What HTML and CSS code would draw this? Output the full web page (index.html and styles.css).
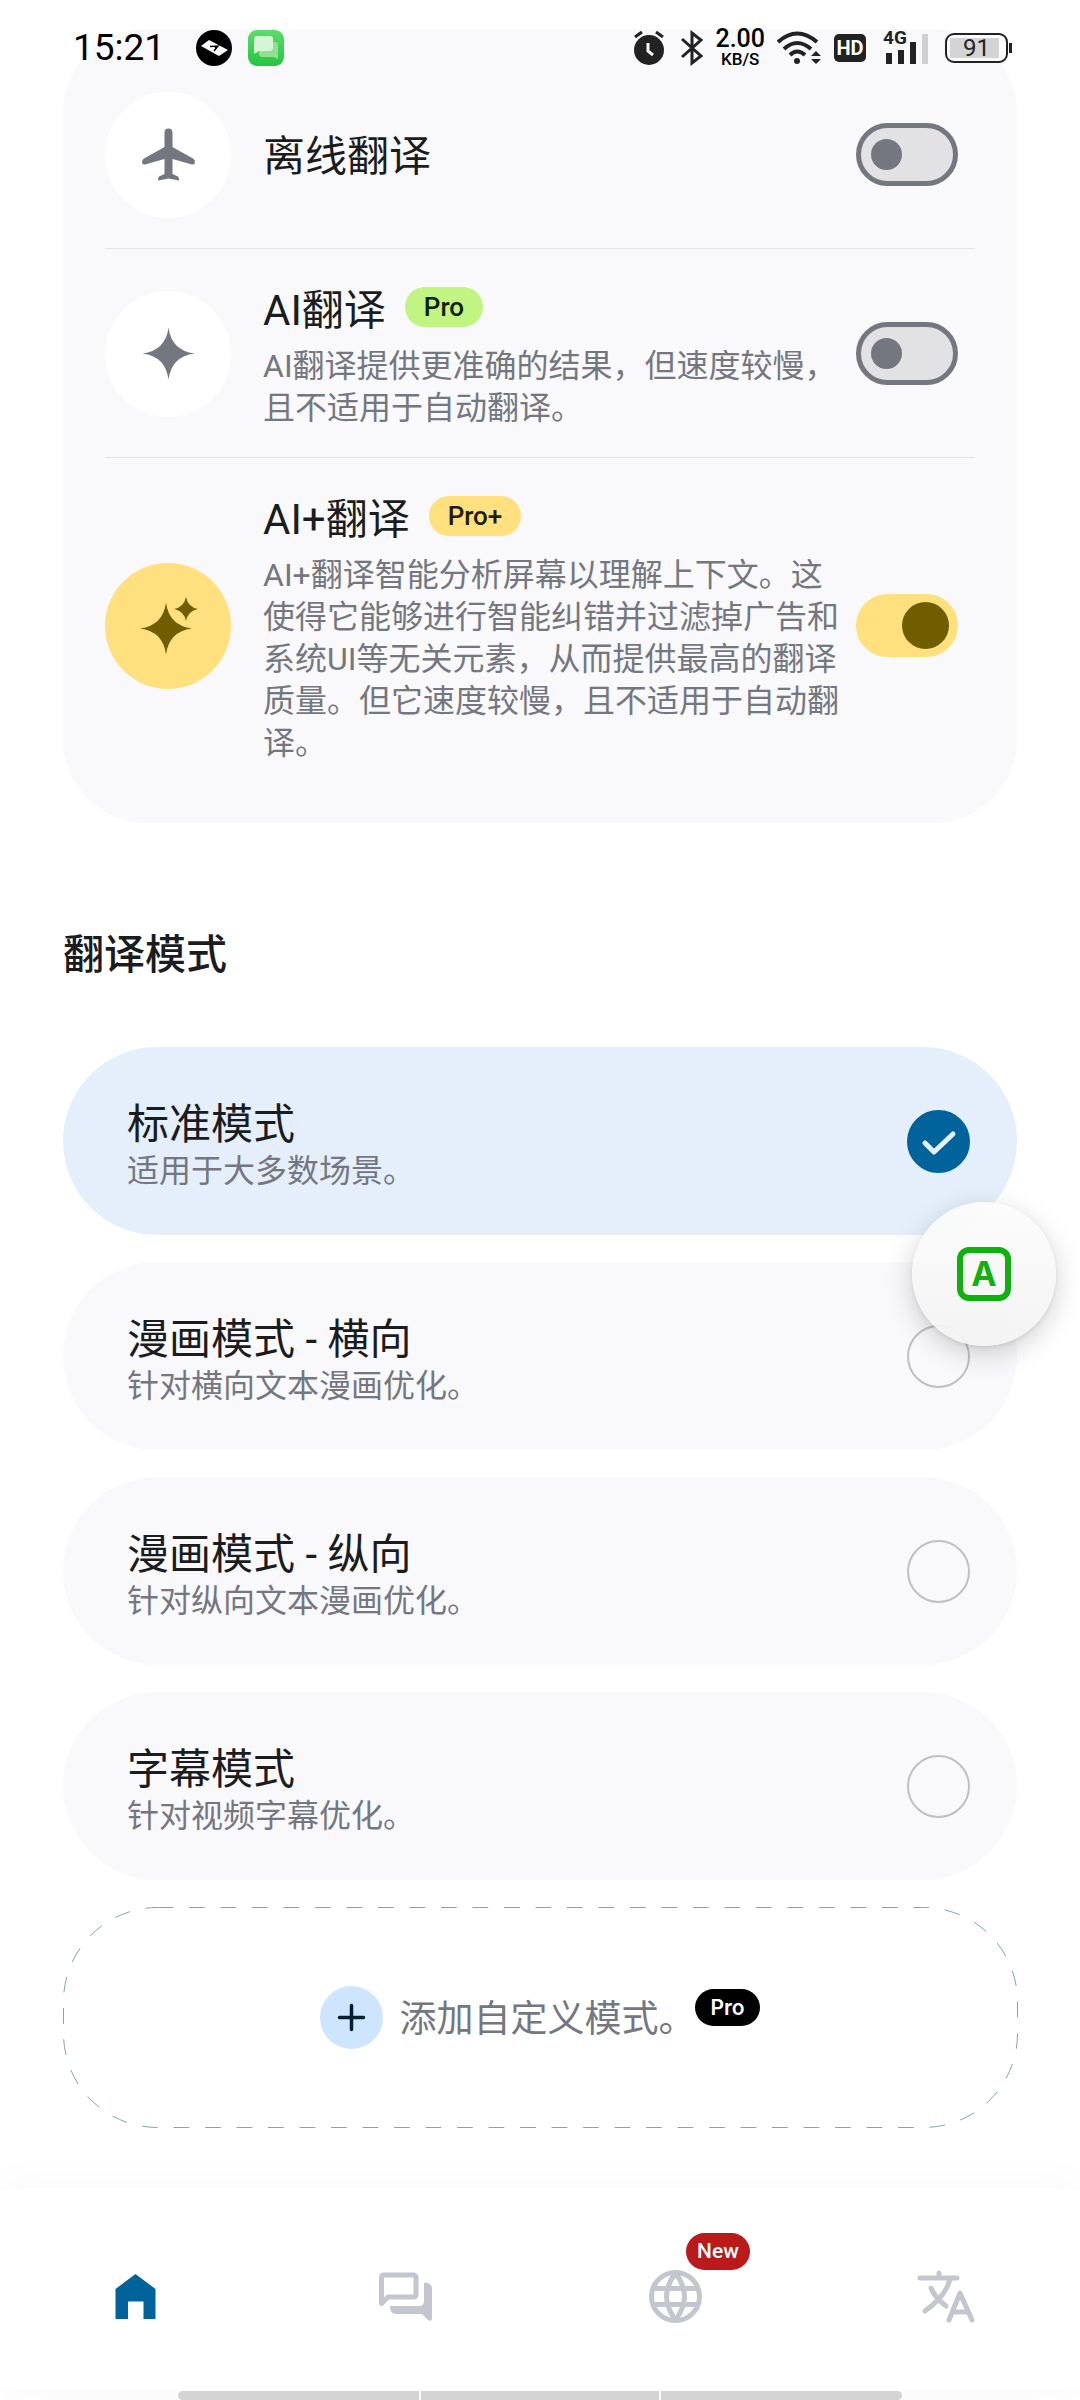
FILE: index.html
```html
<!DOCTYPE html>
<html lang="zh-CN">

<head>
    <meta charset="UTF-8">
    <meta name="viewport" content="width=device-width, initial-scale=1.0">
    <title>翻译模式</title>
    <link rel="stylesheet" href="styles.css">
</head>

<body>

    <!-- Status bar -->
    <header class="status-bar">
        <div class="status-left">
            <span class="clock">15:21</span>
            <svg class="app-icon" viewBox="0 0 36 36">
                <circle cx="18" cy="18" r="18" fill="#000" />
                <path d="M5 16L13 10L32 20L23 26Z" fill="#fff" />
                <path d="M14 16.500L22 16L18 21M19 16.500L20 18.500" fill="none" stroke="#000" stroke-width="1.500" />
            </svg>
            <svg class="app-icon" viewBox="0 0 36 36">
                <defs>
                    <linearGradient id="green" x1="0" y1="0" x2="0" y2="1">
                        <stop offset="0" stop-color="#5bdc6c" />
                        <stop offset="1" stop-color="#25c441" />
                    </linearGradient>
                </defs>
                <rect width="36" height="36" rx="9" fill="url(#green)" />
                <path d="M13 12H27Q30 12 30 15V29L26 27H14Q11 27 11 24V15Q11 12 13 12Z" fill="#8fe08f" />
                <path d="M9 6H22Q25 6 25 9V18Q25 21 22 21H11L6 24V9Q6 6 9 6Z" fill="#d5f5d5" />
            </svg>
        </div>
        <div class="status-right">
            <svg class="alarm" viewBox="0 0 32 36">
                <circle cx="16" cy="20" r="15" fill="#222" />
                <path d="M2 7L9 2M30 7L23 2" stroke="#222" stroke-width="3" />
                <path d="M15 13V21L20 25" fill="none" stroke="#f9f9fc" stroke-width="3" />
            </svg>
            <svg class="bluetooth" viewBox="0 0 22 36">
                <path d="M1 9L20 26L11 33V3L20 10L1 27" fill="none" stroke="#222" stroke-width="3" />
            </svg>
            <div class="speed">
                <span class="speed-value">2.00</span>
                <span class="speed-unit">KB/S</span>
            </div>
            <svg class="wifi" viewBox="0 0 44 34">
                <g fill="none" stroke="#222" stroke-width="4">
                    <path d="M1 11Q20 -6 40 11" />
                    <path d="M7 18Q20 6 34 18" />
                    <path d="M13 24Q20 17 28 24" />
                </g>
                <circle cx="20" cy="30" r="3" fill="#222" />
                <path d="M34 25H44L39 20ZM34 28H44L39 33Z" fill="#222" />
            </svg>
            <span class="hd">HD</span>
            <div class="signal">
                <span class="signal-label">4G</span>
                <svg viewBox="0 0 46 34">
                    <path d="M6 22V33M18 19V33M30 11V33" stroke="#222" stroke-width="6" />
                    <path d="M42 3V33" stroke="#d0d0d3" stroke-width="6" />
                </svg>
            </div>
            <span class="battery">91</span>
        </div>
    </header>

    <main class="content">

        <!-- Translation engines -->
        <section class="engines">
            <label class="engine">
                <span class="engine-icon">
                    <svg viewBox="0 0 63 63">
                        <path d="M27.500 9.500Q27.500 5.500 31.500 5.500Q35.500 5.500 35.500 9.500V24L56 35.500Q58 36.500 58 39Q58 42 55 41.500L35.500 36V51L41 53.500Q42 54 42 57.500L31.500 55.500L21 57.500Q21 54 22 53.500L27.500 51V36L8 41.500Q5 42 5 39Q5 36.500 7 35.500L27.500 24Z" />
                    </svg>
                </span>
                <span class="engine-text">
                    <span class="engine-title">离线翻译</span>
                </span>
                <input class="switch" type="checkbox">
            </label>

            <label class="engine">
                <span class="engine-icon">
                    <svg viewBox="0 0 63 63">
                        <path d="M31.500 5.500Q34.500 28.500 57.500 31.500Q34.500 34.500 31.500 57.500Q28.500 34.500 5.500 31.500Q28.500 28.500 31.500 5.500Z" />
                    </svg>
                </span>
                <span class="engine-text">
                    <span class="engine-title">AI翻译 <span class="badge badge-pro">Pro</span></span>
                    <span class="engine-desc">AI翻译提供更准确的结果，但速度较慢，且不适用于自动翻译。</span>
                </span>
                <input class="switch" type="checkbox">
            </label>

            <label class="engine">
                <span class="engine-icon engine-icon-plus">
                    <svg viewBox="0 0 63 63">
                        <path d="M29 8.500Q32 31.500 55 34.500Q32 37.500 29 60.500Q26 37.500 3 34.500Q26 31.500 29 8.500Z" />
                        <path d="M49 3Q51 13 61 15Q51 17 49 27Q47 17 37 15Q47 13 49 3Z" />
                    </svg>
                </span>
                <span class="engine-text">
                    <span class="engine-title">AI+翻译 <span class="badge badge-plus">Pro+</span></span>
                    <span class="engine-desc">AI+翻译智能分析屏幕以理解上下文。这使得它能够进行智能纠错并过滤掉广告和系统UI等无关元素，从而提供最高的翻译质量。但它速度较慢，且不适用于自动翻译。</span>
                </span>
                <input class="switch" type="checkbox" checked>
            </label>
        </section>

        <!-- Translation modes -->
        <h2>翻译模式</h2>

        <div class="modes">
            <label class="mode">
                <span class="mode-text">
                    <span class="mode-title">标准模式</span>
                    <span class="mode-desc">适用于大多数场景。</span>
                </span>
                <span class="mode-radio">
                    <input type="radio" name="mode" checked>
                    <svg viewBox="0 0 63 63"><path d="M18 33L27 42L46 24" /></svg>
                </span>
            </label>

            <label class="mode">
                <span class="mode-text">
                    <span class="mode-title">漫画模式 - 横向</span>
                    <span class="mode-desc">针对横向文本漫画优化。</span>
                </span>
                <span class="mode-radio">
                    <input type="radio" name="mode">
                </span>
            </label>

            <label class="mode">
                <span class="mode-text">
                    <span class="mode-title">漫画模式 - 纵向</span>
                    <span class="mode-desc">针对纵向文本漫画优化。</span>
                </span>
                <span class="mode-radio">
                    <input type="radio" name="mode">
                </span>
            </label>

            <label class="mode">
                <span class="mode-text">
                    <span class="mode-title">字幕模式</span>
                    <span class="mode-desc">针对视频字幕优化。</span>
                </span>
                <span class="mode-radio">
                    <input type="radio" name="mode">
                </span>
            </label>

            <button class="add-mode" type="button">
                <svg class="add-outline"><rect x="0.500" y="0.500" width="100%" height="100%" rx="94" stroke-dasharray="15.750" /></svg>
                <svg class="add-icon" viewBox="0 0 63 63">
                    <circle cx="31.500" cy="31.500" r="31.500" fill="#cee5ff" />
                    <path d="M19.500 31.500H43.500M31.500 19.500V43.500" stroke="#001d33" stroke-width="3.500" stroke-linecap="round" />
                </svg>
                <span class="add-text">添加自定义模式。</span>
                <span class="add-badge">Pro</span>
            </button>
        </div>
    </main>

    <!-- Floating translate button -->
    <button class="floating" type="button"><span class="floating-icon">A</span></button>

    <nav class="bottom-nav">
        <a class="active" href="#" aria-label="首页">
            <svg viewBox="0 0 63 63"><path d="M31.500 9L51.500 24V54H39.500V36.500H24V54H11.500V24Z" /></svg>
        </a>
        <a href="#" aria-label="对话">
            <svg viewBox="0 0 63 63">
                <path d="M10 10H39Q42 10 42 13V29Q42 32 39 32H14L7.500 38.500V13Q7.500 10 10 10Z" fill="none" stroke="#c3c6cf" stroke-width="5" stroke-linejoin="round" />
                <path d="M50 17.500Q58 17.500 58 24V54Q57 57 54 55L48 49H22Q16 49 16 41H45Q50 41 50 36Z" />
            </svg>
        </a>
        <a href="#" aria-label="网页">
            <span class="nav-badge">New</span>
            <svg viewBox="0 0 63 63">
                <g fill="none" stroke="#c3c6cf" stroke-width="5">
                    <circle cx="31.500" cy="31.500" r="24" />
                    <path d="M31.500 8Q22.500 20 22.500 31.500T31.500 55M31.500 8Q40.500 20 40.500 31.500T31.500 55M10 23.500H53M10 39.500H53" />
                </g>
            </svg>
        </a>
        <a href="#" aria-label="语言">
            <svg viewBox="0 0 63 63">
                <g fill="none" stroke="#c3c6cf" stroke-width="5" stroke-linecap="round" stroke-linejoin="round">
                    <path d="M6 13H43M25 8V12M36 14Q32 31 11 46M17 23Q21 33 32 41" />
                    <path d="M35 55L46 28L58 55M39 47H53" />
                </g>
            </svg>
        </a>
    </nav>
    <div class="gesture-bar"><span></span><span></span><span></span></div>

</body>

</html>
```

FILE: styles.css
```css
* {
    box-sizing: border-box;
}

body {
    position: relative;
    display: flex;
    flex-direction: column;
    min-height: 100vh;
    margin: 0;
    background-color: #fff;
    color: #1a1c1e;
    font-family: Roboto, "Noto Sans CJK SC", sans-serif;
}

button {
    font-family: inherit;
    cursor: pointer;
}

/* Status bar */
.status-bar {
    position: absolute;
    top: 28px;
    left: 0;
    right: 0;
    display: flex;
    justify-content: space-between;
    align-items: center;
    height: 40px;
    padding: 0 72px 0 73px;
    color: #000;
}

.status-left,
.status-right {
    display: flex;
    align-items: center;
}

.status-left {
    gap: 16px;
}

.clock {
    margin-right: 15px;
    font-size: 37px;
    line-height: 40px;
}

.app-icon {
    width: 36px;
    height: 36px;
}

.alarm {
    width: 32px;
    height: 36px;
    margin-right: 16px;
}

.bluetooth {
    width: 22px;
    height: 36px;
    margin-right: 12px;
}

.speed {
    display: flex;
    flex-direction: column;
    align-items: center;
    margin-right: 12px;
    font-weight: 500;
}

.speed-value {
    font-size: 25px;
    line-height: 22px;
}

.speed-unit {
    font-size: 17px;
    line-height: 18px;
}

.wifi {
    width: 44px;
    height: 34px;
    margin-right: 13px;
}

.hd {
    width: 32px;
    height: 28px;
    margin-right: 17px;
    border-radius: 5px;
    background-color: #222;
    color: #fff;
    font-size: 20px;
    font-weight: 700;
    line-height: 28px;
    text-align: center;
}

.signal {
    position: relative;
    width: 46px;
    height: 34px;
    margin-right: 16px;
}

.signal svg {
    display: block;
}

.signal-label {
    position: absolute;
    top: -2px;
    left: 0;
    color: #222;
    font-size: 19px;
    font-weight: 700;
    line-height: 18px;
}

.battery {
    position: relative;
    width: 63px;
    height: 30px;
    border: 2px solid #222;
    border-radius: 9px;
    background: linear-gradient(#d4d4d6, #d4d4d6) 3px 3px / 49px 20px no-repeat;
    color: #222;
    font-size: 24px;
    line-height: 26px;
    text-align: center;
}

.battery::after {
    content: "";
    position: absolute;
    top: 8px;
    right: -6px;
    width: 3px;
    height: 10px;
    background-color: #222;
}

.content {
    padding: 29px 63px 0;
}

/* Translation engines */
.engines {
    padding: 31px 42px;
    border-radius: 84px;
    background-color: #f9f9fc;
}

.engine {
    display: flex;
    align-items: center;
    min-height: 188px;
    padding: 29px 17px 28px 0;
}

.engine + .engine {
    border-top: 1px solid #e6e6ea;
}

.engine-icon {
    display: flex;
    align-items: center;
    justify-content: center;
    flex: none;
    width: 126px;
    height: 126px;
    margin-right: 32px;
    border-radius: 50%;
    background-color: #fff;
    fill: #74777f;
}

.engine-icon svg {
    width: 63px;
    height: 63px;
}

.engine-icon-plus {
    background-color: #ffe07f;
    fill: #6f5d00;
}

.engine-text {
    flex: 1;
    margin-right: 12px;
}

.engine-title {
    display: flex;
    align-items: center;
    gap: 19px;
    padding-top: 4px;
    font-size: 42px;
    line-height: 57px;
}

.engine-desc {
    display: block;
    margin-top: 6px;
    color: #74777f;
    font-size: 32px;
    line-height: 42px;
}

.badge {
    margin-bottom: 8px;
    padding: 0 19px;
    border-radius: 20px;
    font-size: 26px;
    font-weight: 500;
    line-height: 40px;
}

.badge-pro {
    background-color: #c2f482;
    color: #0f2000;
}

.badge-plus {
    background-color: #ffe07f;
    color: #221b00;
}

.switch {
    position: relative;
    appearance: none;
    flex: none;
    width: 102px;
    height: 63px;
    margin: 0;
    border: 5px solid #74777f;
    border-radius: 32px;
    background-color: #e2e2e5;
}

.switch::before {
    content: "";
    position: absolute;
    top: 11px;
    left: 10px;
    width: 31px;
    height: 31px;
    border-radius: 50%;
    background-color: #74777f;
}

.switch:checked {
    border-color: #ffe07f;
    background-color: #ffe07f;
}

.switch:checked::before {
    top: 3px;
    left: 41px;
    width: 47px;
    height: 47px;
    background-color: #6f5d00;
}

/* Translation modes */
h2 {
    margin: 102px 0 62px;
    font-size: 41px;
    font-weight: 500;
    line-height: 60px;
}

.modes {
    display: flex;
    flex-direction: column;
    gap: 27px;
}

.mode {
    display: flex;
    align-items: center;
    justify-content: space-between;
    min-height: 188px;
    padding: 0 47px 0 64px;
    border-radius: 94px;
    background-color: #f9f9fc;
}

.mode:has(input:checked) {
    background-color: #e5effc;
}

.mode-title,
.mode-desc {
    display: block;
}

.mode-title {
    padding-top: 10px;
    font-size: 42px;
    line-height: 50px;
}

.mode-desc {
    color: #74777f;
    font-size: 32px;
    line-height: 42px;
}

.mode-radio {
    display: grid;
    width: 63px;
    height: 63px;
}

.mode-radio input,
.mode-radio svg {
    grid-area: 1 / 1;
    width: 63px;
    height: 63px;
    margin: 0;
}

.mode-radio input {
    appearance: none;
    border: 2px solid #c0c0c4;
    border-radius: 50%;
}

.mode-radio input:checked {
    border-color: #00639b;
    background-color: #00639b;
}

.mode-radio path {
    fill: none;
    stroke: #e5f1ff;
    stroke-width: 5px;
    stroke-linecap: round;
    stroke-linejoin: round;
}

.add-mode {
    position: relative;
    display: flex;
    align-items: center;
    justify-content: center;
    min-height: 220px;
    padding: 0;
    border: none;
    background: none;
}

.add-outline {
    position: absolute;
    inset: 0;
    width: 100%;
    height: 100%;
    overflow: visible;
    fill: none;
    stroke: #86a3ae;
    stroke-width: 1px;
}

.add-icon {
    width: 63px;
    height: 63px;
    margin-right: 16px;
}

.add-text {
    padding-top: 6px;
    color: #74777f;
    font-size: 37px;
    line-height: 54px;
}

.add-badge {
    align-self: flex-start;
    margin-top: 82px;
    padding: 0 15px;
    border-radius: 19px;
    background-color: #000;
    color: #fff;
    font-family: Inter, sans-serif;
    font-size: 21px;
    font-weight: 600;
    line-height: 37px;
}

.floating {
    position: absolute;
    top: 1202px;
    right: 24px;
    display: flex;
    align-items: center;
    justify-content: center;
    width: 144px;
    height: 144px;
    padding: 0;
    border: none;
    border-radius: 50%;
    background: linear-gradient(rgba(252, 252, 252, 0.95), rgba(243, 243, 243, 0.95));
    box-shadow: 0 8px 28px rgba(0, 0, 0, 0.18), 0 2px 4px rgba(0, 0, 0, 0.08);
}

.floating-icon {
    width: 54px;
    height: 54px;
    border: 6px solid #11b011;
    border-radius: 12px;
    color: #11b011;
    font-family: Inter, sans-serif;
    font-size: 34px;
    font-weight: 700;
    line-height: 42px;
    text-align: center;
}

/* Bottom navigation */
.bottom-nav {
    display: grid;
    grid-template-columns: repeat(4, 1fr);
    margin-top: auto;
    background-color: #fff;
    box-shadow: 0 0 50px rgba(0, 0, 0, 0.03);
}

.bottom-nav a {
    position: relative;
    display: flex;
    justify-content: center;
    padding: 76px 0 63px;
    fill: #c3c6cf;
}

.bottom-nav a.active {
    fill: #00639b;
}

.bottom-nav svg {
    width: 63px;
    height: 63px;
}

.nav-badge {
    position: absolute;
    top: 44px;
    left: 50%;
    margin-left: 11px;
    padding: 0 11px;
    border-radius: 19px;
    background-color: #ba1a1a;
    color: #fff;
    font-size: 21px;
    font-weight: 500;
    line-height: 37px;
}

.gesture-bar {
    display: grid;
    grid-template-columns: 241fr 237fr 241fr;
    gap: 2px;
    width: 67%;
    margin: 0 auto;
}

.gesture-bar span {
    height: 9px;
    background-color: #d4d4d4;
}

.gesture-bar span:first-child {
    border-radius: 5px 0 0 5px;
}

.gesture-bar span:last-child {
    border-radius: 0 5px 5px 0;
}
```
